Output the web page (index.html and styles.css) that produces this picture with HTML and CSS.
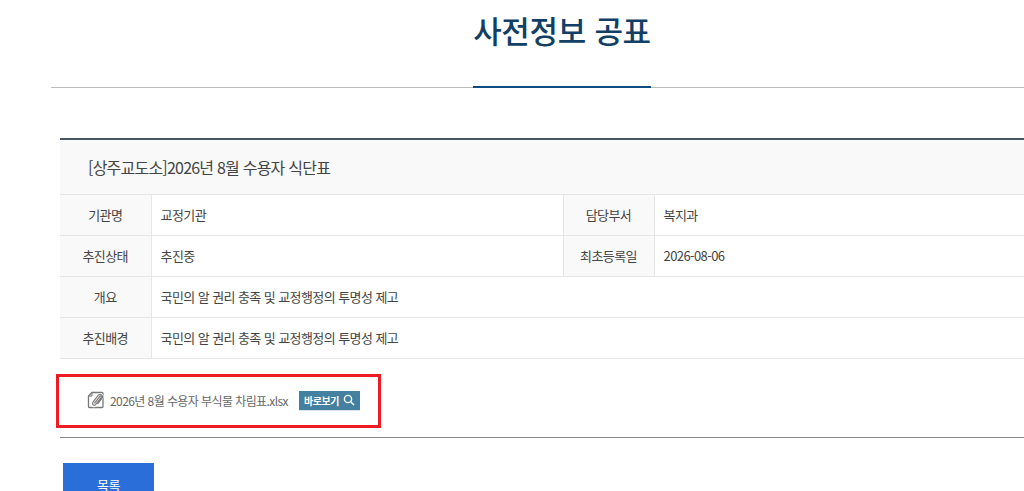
FILE: index.html
```html
<!DOCTYPE html>
<html lang="ko">
<head>
<meta charset="utf-8">
<title>사전정보 공표</title>
<link rel="stylesheet" href="styles.css">
</head>
<body>
<header class="page-head">
  <h1 class="page-title">사전정보 공표</h1>
</header>
<main class="content">
  <section class="board">
    <h2 class="board-title">[상주교도소]2026년 8월 수용자 식단표</h2>
    <table class="info">
      <colgroup><col class="c-th"><col class="c-td"><col class="c-th2"><col></colgroup>
      <tr><th>기관명</th><td>교정기관</td><th>담당부서</th><td>복지과</td></tr>
      <tr><th>추진상태</th><td>추진중</td><th>최초등록일</th><td>2026-08-06</td></tr>
      <tr><th>개요</th><td colspan="3">국민의 알 권리 충족 및 교정행정의 투명성 제고</td></tr>
      <tr><th>추진배경</th><td colspan="3">국민의 알 권리 충족 및 교정행정의 투명성 제고</td></tr>
    </table>
    <div class="files">
      <div class="highlight">
        <svg class="clip" width="18" height="18" viewBox="0 0 18 18" fill="none">
          <path d="M5 1.5H15C15.6 1.5 16 1.9 16 2.5V15.5C16 16.1 15.6 16.5 15 16.5H2.5C1.9 16.5 1.5 16.1 1.5 15.5V5Z" stroke="#777" stroke-width="1.3"/>
          <path d="M5 1.5V5H1.5" stroke="#777" stroke-width="1"/>
          <path d="M5 12.5L11.5 4.2C13.8 1.8 17.2 4.6 15 7.2L9.2 14.4C7.4 16.4 3.8 14.6 5 12.5Z" fill="#fff" stroke="#fff" stroke-width="2"/>
          <path d="M7.4 12.4L12.8 5.3C13.6 4.4 14.9 5.4 14.2 6.4L8.6 13.6C7.4 15 4.7 13.8 5.8 11.4L11.3 4.2C13.4 2 16.9 4.5 15.1 7.2L10.6 13" stroke="#7d7d7d" stroke-width="1.2"/>
        </svg>
        <span class="file-name">2026년 8월 수용자 부식물 차림표.xlsx</span>
        <a class="view-btn">바로보기
          <svg width="12" height="12" viewBox="0 0 12 12" fill="none" stroke="#fff" stroke-width="1.4"><circle cx="5" cy="5" r="3.6"/><path d="M7.7 7.7L11 11"/></svg>
        </a>
      </div>
    </div>
  </section>
  <a class="list-btn">목록</a>
</main>
</body>
</html>
```
FILE: styles.css
```css
* { box-sizing: border-box; }
html, body { margin: 0; padding: 0; height: 491px; overflow: hidden; background: #fff; }
body {
  font-family: "Noto Sans CJK KR", "Noto Sans", sans-serif;
  color: #444;
  letter-spacing: -0.5px;
}
.page-head {
  margin-left: 51px;
  width: 1022px;
  height: 88px;
  border-bottom: 1px solid #bbb;
  display: flex;
  justify-content: center;
}
.page-title {
  margin: 0;
  height: 88px;
  padding-top: 7px;
  border-bottom: 2px solid #0f4c81;
  font-size: 31px;
  line-height: 46px;
  font-weight: 500;
  color: #123f66;
  letter-spacing: -0.3px;
}
.content { margin-left: 60px; width: 1100px; padding-top: 50px; }
.board { border-top: 2px solid #4a5563; border-bottom: 1px solid #888; }
.board-title {
  margin: 0;
  height: 54px;
  padding-left: 28px;
  background: #f9f9f9;
  font-size: 16px;
  font-weight: 400;
  line-height: 54px;
  color: #444;
  letter-spacing: -0.78px;
}
.info { width: 100%; border-collapse: collapse; table-layout: fixed; font-size: 13px; letter-spacing: -0.58px; line-height: 18px; }
.c-th { width: 91px; }
.c-td { width: 412px; }
.c-th2 { width: 91px; }
.info tr { height: 41px; }
.info th, .info td { border: 1px solid #e6e6e6; border-left: 0; border-right: 0; padding: 0 0 1px; }
.info th {
  background: #f9f9f9;
  font-weight: 400;
  color: #444;
  text-align: center;
  border-right: 1px solid #e6e6e6;
}
.info td { padding-left: 9px; color: #444; }
.info td + th { border-left: 1px solid #e6e6e6; }
.files { height: 78px; padding: 4px 0 0 27px; display: flex; align-items: center; }
.highlight {
  display: flex;
  align-items: center;
  position: relative;
  font-size: 12px;
  color: #666;
}
.highlight::before {
  content: "";
  box-sizing: border-box;
  position: absolute;
  left: -31px;
  top: -17px;
  width: 325px;
  height: 54px;
  border: 3px solid #ed1c24;
}
.clip { margin-right: 5px; }
.file-name { letter-spacing: -0.58px; }
.view-btn {
  margin-left: 11px;
  width: 61px;
  height: 19px;
  background: #44809f;
  box-shadow: 0 1px 0 #dde3e8;
  color: #fff;
  font-size: 10px;
  font-weight: 700;
  display: flex;
  align-items: center;
  justify-content: center;
  gap: 4px;
  letter-spacing: -0.5px;
}
.list-btn {
  display: flex;
  align-items: center;
  justify-content: center;
  margin: 25px 0 0 3px;
  width: 91px;
  height: 42px;
  background: #2a6fd9;
  color: #fff;
  font-size: 13px;
}
```
